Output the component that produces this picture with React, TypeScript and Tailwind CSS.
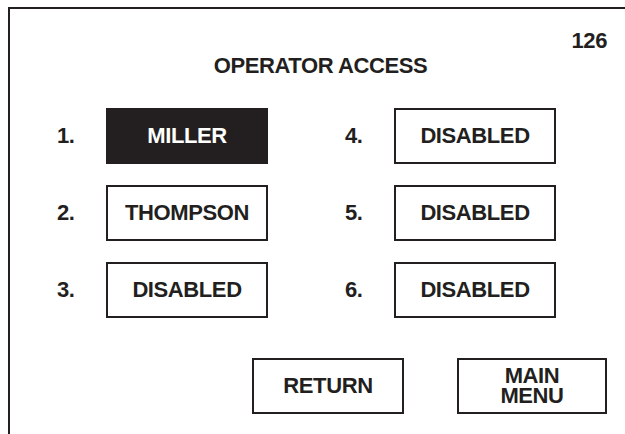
import React from "react";

const ink = "text-[#231f20]";

function Box({ children, active = false }: { children: React.ReactNode; active?: boolean }) {
  return (
    <div
      className={
        "flex h-[56px] w-[162px] items-center justify-center border-2 border-[#231f20] leading-[24px] " +
        (active ? "bg-[#231f20] text-white" : "bg-white text-[#231f20]")
      }
    >
      {children}
    </div>
  );
}

function Row({ n, name, active = false }: { n: string; name: string; active?: boolean }) {
  return (
    <>
      <div className={"flex items-center leading-[24px] " + ink}>{n}</div>
      <Box active={active}>{name}</Box>
    </>
  );
}

export default function App() {
  return (
    <div
      className={"h-[434px] w-[625px] overflow-hidden bg-white text-[22px] font-bold tracking-[-0.4px] " + ink}
      style={{ fontFamily: '"Liberation Sans", Arial, Helvetica, sans-serif' }}
    >
      <div className="ml-[8px] mt-[7px] flex h-[427px] w-[617px] flex-col border-l-2 border-t-2 border-[#231f20]">
        <div className="mt-[20px] flex justify-end pr-[18px] leading-[24px]">126</div>
        <div className="mt-px pl-[6px] text-center leading-[24px]">OPERATOR ACCESS</div>
        <div className="mt-[30px] grid grid-cols-[49px_162px_77px_49px_162px] gap-y-[21px] pl-[47px]">
          <Row n="1." name="MILLER" active />
          <div />
          <Row n="4." name="DISABLED" />
          <Row n="2." name="THOMPSON" />
          <div />
          <Row n="5." name="DISABLED" />
          <Row n="3." name="DISABLED" />
          <div />
          <Row n="6." name="DISABLED" />
        </div>
        <div className="mt-[40px] flex justify-end gap-[53px] pr-[18px]">
          <div className="flex h-[56px] w-[152px] items-center justify-center border-2 border-[#231f20] leading-[24px]">
            RETURN
          </div>
          <div className="flex h-[56px] w-[150px] items-center justify-center border-2 border-[#231f20] text-center leading-[20px]">
            <div>
              MAIN
              <br />
              MENU
            </div>
          </div>
        </div>
      </div>
    </div>
  );
}
